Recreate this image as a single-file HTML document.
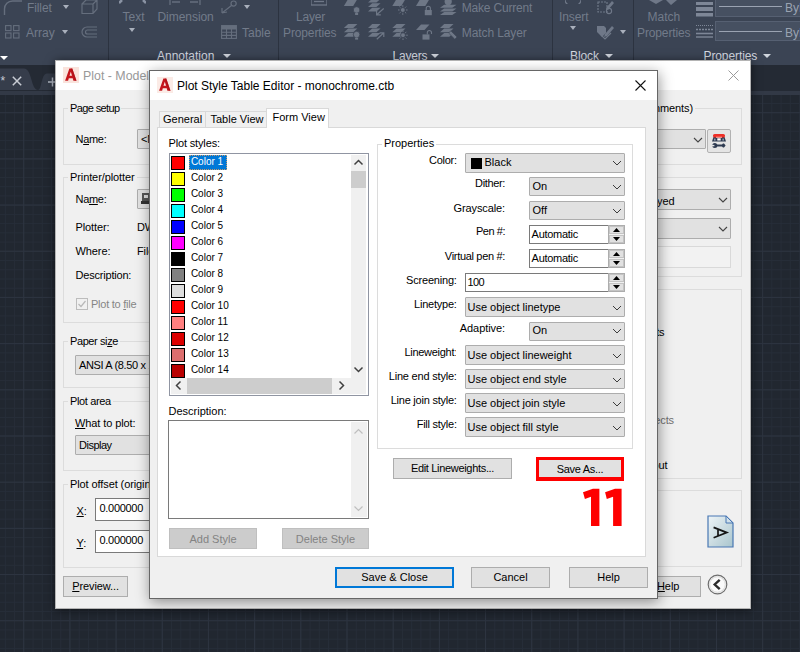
<!DOCTYPE html>
<html><head><meta charset="utf-8"><title>Plot Style Table Editor</title>
<style>
*{box-sizing:border-box;margin:0;padding:0}
html,body{width:800px;height:652px;overflow:hidden}
body{position:relative;background:#212832;font-family:"Liberation Sans",sans-serif;font-size:11px;color:#000}
div,span,svg{position:absolute}
span{white-space:pre;line-height:14px;height:14px}
#canvas{left:0;top:95px;width:800px;height:557px;background-color:#212730;
 background-image:linear-gradient(#2d3440 1px,transparent 1px),linear-gradient(90deg,#2d3440 1px,transparent 1px),linear-gradient(#262d38 1px,transparent 1px),linear-gradient(90deg,#262d38 1px,transparent 1px);
 background-size:46.2px 46.2px,46.2px 46.2px,9.24px 9.24px,9.24px 9.24px;background-position:0 17.2px,23.2px 0,0 8.1px,4.9px 0}
#ribbon{left:0;top:0;width:800px;height:65px;background:#3b4454}
#ribtitle{left:0;top:91px;width:800px;height:4px;background:#323946}
#tabbar{left:0;top:65px;width:800px;height:26px;background:#242a34}
.rt{color:#727b8a;font-size:12px}
.rl{color:#d6dae2;font-size:12px}
.sep{top:0;width:1px;height:65px;background:#2c3340}
.tri{width:0;height:0;border-left:3.5px solid transparent;border-right:3.5px solid transparent;border-top:4px solid #a9b0bc}
.tril{width:0;height:0;border-left:4px solid transparent;border-right:4px solid transparent;border-top:4.5px solid #d0d5dd}
#plot{left:55px;top:60px;width:696px;height:549px;background:#f0f0f0;border:1px solid #b4b4b4;box-shadow:0 1px 9px rgba(0,0,0,.55)}
#plot span{letter-spacing:-.1px}
#plot .title{left:0;top:0;width:694px;height:29px;background:#fff}
.grp{border:1px solid #dcdcdc}
.gl{background:#f0f0f0;padding:0 2px}
.glw{background:#fff;padding:0 2px}
.dis{color:#a0a0a0}
.btn{border:1px solid #adadad;background:#e1e1e1;text-align:center;height:21px}
.btn span{position:static;display:block;line-height:19px;height:19px}
.combo{border:1px solid #adadad;background:#e1e1e1;overflow:hidden;border-radius:1px}
.combo span{left:3px}
.input{border:1px solid #7a7a7a;background:#fff;overflow:hidden}
#ed{left:149px;top:70px;width:509px;height:529px;background:#f0f0f0;border:1px solid #666;box-shadow:1px 3px 13px rgba(0,0,0,.42)}
#ed .title{left:0;top:0;width:507px;height:29px;background:#fff}
u{text-decoration:underline}
</style></head><body>
<div id="canvas"></div><div id="ribbon"></div><div id="ribtitle"></div><div id="tabbar"></div>
<div class="sep" style="left:108px"></div><div class="sep" style="left:277.5px"></div><div class="sep" style="left:552px"></div><div class="sep" style="left:632.5px"></div>
<svg style="left:3px;top:0" width="20" height="15" viewBox="0 0 20 15"><path d="M1.5 15 V9 A8 8 0 0 1 9.5 1 H19" fill="none" stroke="#656e7d" stroke-width="1.4"/></svg><span class="rt" style="left:27px;top:1px;letter-spacing:-.1px">Fillet</span>
<div class="tri" style="left:63px;top:5px"></div><svg style="left:81px;top:0" width="17" height="15" viewBox="0 0 17 15"><path d="M1 4 L5 0 H16 V9 L12 13.5 H1 Z M1 4 H12 V13.5 M12 4 L16 0" fill="none" stroke="#656e7d" stroke-width="1.2"/></svg><svg style="left:5px;top:25px" width="15" height="14" viewBox="0 0 15 14"><g fill="none" stroke="#656e7d" stroke-width="1.1"><rect x=".6" y=".6" width="5.4" height="5"/><rect x="8.6" y=".6" width="5.4" height="5"/><rect x=".6" y="8" width="5.4" height="5"/><rect x="8.6" y="8" width="5.4" height="5"/></g></svg><span class="rt" style="left:26px;top:26px;">Array</span>
<div class="tri" style="left:62px;top:30px"></div><svg style="left:81px;top:26px" width="17" height="12" viewBox="0 0 17 12"><path d="M16 1 H6 A5 5 0 0 0 6 11 H16 M16 4 H6.5 A2 2 0 0 0 6.5 8 H16" fill="none" stroke="#656e7d" stroke-width="1.2"/></svg><div class="tril" style="left:0px;top:55.5px;border-top-color:#fff"></div><svg style="left:119px;top:0" width="27" height="4" viewBox="0 0 27 4"><path d="M0 3 L3 0 M27 3 L24 0" stroke="#8a93a3" stroke-width="2.5"/></svg><span class="rt" style="left:122.5px;top:9.5px;">Text</span>
<div class="tri" style="left:128.5px;top:28px"></div><svg style="left:168px;top:0" width="34" height="5" viewBox="0 0 34 5"><path d="M2 0 V5 M32 0 V5 M4 2 H12 M22 2 H30" stroke="#656e7d" stroke-width="1.3" fill="none"/></svg><span class="rt" style="left:157.5px;top:9.5px;letter-spacing:-.05px">Dimension</span>
<svg style="left:221px;top:0" width="17" height="14" viewBox="0 0 17 14"><path d="M1 13 L1 8 M1 13 L6 12 M1 13 L10.5 5.5" stroke="#656e7d" stroke-width="1.2" fill="none"/><circle cx="12.6" cy="3.6" r="2.6" fill="none" stroke="#656e7d" stroke-width="1.2"/></svg><div class="tri" style="left:244px;top:5px"></div><svg style="left:221px;top:25px" width="16" height="14" viewBox="0 0 16 14"><g fill="none" stroke="#656e7d" stroke-width="1.1"><rect x=".6" y=".6" width="14.8" height="12.8"/><path d="M.6 4 H15.4 M.6 7.2 H15.4 M.6 10.4 H15.4 M5.5 4 V13.4 M10.5 4 V13.4"/></g><rect x=".6" y=".6" width="14.8" height="3.4" fill="#656e7d"/></svg><span class="rt" style="left:242px;top:26px;">Table</span>
<span class="rl" style="left:157px;top:49px;">Annotation</span>
<div class="tril" style="left:222.5px;top:54px"></div><svg style="left:311px;top:0" width="16" height="6" viewBox="0 0 16 6"><rect x="0" y="-4" width="16" height="9" fill="none" stroke="#6f7888" stroke-width="1.3"/><path d="M3 1.5 H13" stroke="#6f7888" stroke-width="1.3"/></svg><span class="rt" style="left:296px;top:9.5px;letter-spacing:-.2px">Layer</span>
<span class="rt" style="left:283px;top:26px;letter-spacing:-.12px">Properties</span>
<svg style="left:338px;top:0" width="124" height="45" viewBox="338 0 124 45"><g fill="#6e7786"><path d="M348.09999999999997 -1 H357.4 L353.2 6 H343.9 Z "/><circle cx="356.6" cy="10" r="3.3" fill="#6e7786" stroke="#3b4454" stroke-width=".8"/><rect x="355.1" y="13" width="3" height="2" fill="#6e7786"/><path d="M372.2 -1.2 H380.6 L376.40000000000003 2.5999999999999996 H368 Z M372.2 3.3 H380.6 L376.40000000000003 7.1 H368 Z M372.2 7.8 H380.6 L376.40000000000003 11.6 H368 Z "/><path d="M383.7 8.5 L377.2 14.3 M376.6 10.8 V14.9 H380.8" stroke="#6e7786" stroke-width="1.2" fill="none"/><path d="M396.5 -1 H405.5 L401.3 6 H392.3 Z "/><circle cx="402.8" cy="10" r="2.4" fill="#6e7786" stroke="#3b4454" stroke-width=".8"/><path d="M402.8 5.2 V14.8 M398.0 10 H407.6 M399.40000000000003 6.6 L406.2 13.4 M406.2 6.6 L399.40000000000003 13.4" stroke="#6e7786" stroke-width="1" stroke-dasharray="1.6 6.4 1.6 0" fill="none"/><path d="M420.2 -1 H429.5 L425.3 6 H416 Z "/><rect x="424.8" y="10" width="7" height="5.2"/><path d="M426.2 10 V8.4 A2.1 2.1 0 0 1 430.4 8.4 V10" fill="none" stroke="#6e7786" stroke-width="1.1"/><circle cx="448.2" cy="1.6" r="3.6"/><path d="M444.2 4.8 H456.5 L452.3 7.8 H440 Z M444.2 8.4 H456.5 L452.3 11.4 H440 Z M444.2 12.0 H456.5 L452.3 15.0 H440 Z "/><path d="M348.09999999999997 24.0 H357.4 L353.2 27.9 H343.9 Z M348.09999999999997 28.45 H357.4 L353.2 32.35 H343.9 Z M348.09999999999997 32.9 H357.4 L353.2 36.8 H343.9 Z "/><circle cx="356.6" cy="34.6" r="3.3" fill="#6e7786" stroke="#3b4454" stroke-width=".8"/><rect x="355.1" y="37.6" width="3" height="2" fill="#6e7786"/><path d="M372.2 24.0 H380.6 L376.40000000000003 27.9 H368 Z M372.2 28.45 H380.6 L376.40000000000003 32.35 H368 Z M372.2 32.9 H380.6 L376.40000000000003 36.8 H368 Z "/><path d="M376.8 39.2 L383.3 33.2 M379.6 32.8 H383.8 V37" stroke="#6e7786" stroke-width="1.2" fill="none"/><path d="M396.5 24.0 H405.5 L401.3 27.9 H392.3 Z M396.5 28.45 H405.5 L401.3 32.35 H392.3 Z M396.5 32.9 H405.5 L401.3 36.8 H392.3 Z "/><circle cx="403" cy="35.2" r="2.4" fill="#6e7786" stroke="#3b4454" stroke-width=".8"/><path d="M403 30.400000000000002 V40.0 M398.2 35.2 H407.8 M399.6 31.800000000000004 L406.4 38.6 M406.4 31.800000000000004 L399.6 38.6" stroke="#6e7786" stroke-width="1" stroke-dasharray="1.6 6.4 1.6 0" fill="none"/><path d="M421 24.5 H429.5 L424.5 30.0 H416 Z "/><rect x="422.5" y="34.4" width="7" height="5.2"/><path d="M427.3 34.4 V32.6 A2.1 2.1 0 0 1 431.5 32.6 V34" fill="none" stroke="#6e7786" stroke-width="1.1"/><path d="M444.2 24.0 H453.5 L449.3 27.9 H440 Z M444.2 28.45 H453.5 L449.3 32.35 H440 Z M444.2 32.9 H453.5 L449.3 36.8 H440 Z "/><path d="M448.6 33 L450.8 30.8 L457 37 L454.8 39.2 Z" stroke="#3b4454" stroke-width=".6"/></g></svg><span class="rt" style="left:461.8px;top:0.7999999999999998px;letter-spacing:-.2px">Make Current</span>
<span class="rt" style="left:461.8px;top:26px;letter-spacing:-.1px">Match Layer</span>
<span class="rl" style="left:392.5px;top:49px;letter-spacing:-.2px">Layers</span>
<div class="tril" style="left:430.5px;top:54px"></div><svg style="left:565px;top:0" width="16" height="4" viewBox="0 0 16 4"><path d="M0 0 A8 6 0 0 0 16 0" fill="none" stroke="#6f7888" stroke-width="1.3"/></svg><span class="rt" style="left:559px;top:9.5px;letter-spacing:-.1px">Insert</span>
<div class="tri" style="left:569.5px;top:26px"></div><svg style="left:597px;top:0" width="18" height="15" viewBox="0 0 18 15"><path d="M1 2 H10 V12 H1 Z" fill="none" stroke="#6f7888" stroke-width="1.2" stroke-dasharray="2 1"/><path d="M9 8 L15 1 L17 3 L11 10 Z" fill="#6f7888"/><circle cx="12" cy="11" r="2.6" fill="none" stroke="#6f7888" stroke-width="1.1"/></svg><svg style="left:597px;top:24px" width="18" height="16" viewBox="0 0 18 16"><path d="M0 2 H7 L9 4 V9 L5 13 L0 8 Z" fill="#6f7888"/><path d="M8 10 L15 2 L17 4 L10 12 L7 13 Z" fill="#6f7888"/><path d="M4 11 L8 15 L14 9" fill="none" stroke="#6f7888" stroke-width="1.2"/></svg><div class="tri" style="left:619.5px;top:29.5px"></div><span class="rl" style="left:570px;top:49px;letter-spacing:-.1px">Block</span>
<div class="tril" style="left:605px;top:54px"></div><svg style="left:649px;top:0" width="30" height="6" viewBox="0 0 30 6"><path d="M0 0 L7 4 L14 0 M17 0 L22 5 L28 0" fill="#6f7888"/></svg><span class="rt" style="left:647.5px;top:9.5px;">Match</span>
<span class="rt" style="left:637px;top:26px;letter-spacing:-.12px">Properties</span>
<svg style="left:695.5px;top:2px" width="17" height="15" viewBox="0 0 17 15"><g fill="#7e8797"><rect x="0" y="0" width="17" height="3"/><rect x="0" y="5" width="17" height="4"/><rect x="0" y="11" width="17" height="3.5"/></g></svg><svg style="left:695.5px;top:24px" width="17" height="15" viewBox="0 0 17 15"><g stroke="#7e8797" fill="none"><path d="M0 1.5 H17" stroke-width="1.2" stroke-dasharray="1 1"/><path d="M0 5.5 H17" stroke-width="1.4" stroke-dasharray="2 1"/><path d="M0 9.5 H17" stroke-width="1.6"/><path d="M0 13 H17" stroke-width="1.4"/></g></svg><div style="left:715px;top:-3px;width:90px;height:20px;background:#465061;border:1px solid #566072"></div><div style="left:719px;top:6.0px;width:63px;height:1px;background:#9aa3b2"></div><span class="rt" style="left:785px;top:0.5px;color:#9aa3b2">ByL</span>
<div style="left:715px;top:21px;width:90px;height:20px;background:#465061;border:1px solid #566072"></div><div style="left:719px;top:31.0px;width:63px;height:1px;background:#9aa3b2"></div><span class="rt" style="left:785px;top:25.5px;color:#9aa3b2">ByL</span>
<span class="rl" style="left:703.5px;top:49px;letter-spacing:-.1px">Properties</span>
<div class="tril" style="left:763px;top:54px"></div><svg style="left:0;top:65px" width="60" height="25" viewBox="0 0 60 25"><path d="M0 3.5 H24 C32 3.5 31 25 38 25 H0 Z" fill="#363d4b"/><path d="M38 25 C42 25 41 8.5 47 8.5 H60 V25 Z" fill="#333a47"/></svg><span style="left:0.5px;top:74px;color:#c9ced8;font-size:12px">*</span>
<svg style="left:12px;top:75.5px" width="10" height="10" viewBox="0 0 10 10"><path d="M.8 .8 L9.2 9.2 M9.2 .8 L.8 9.2" stroke="#c8ccd4" stroke-width="1.5"/></svg><svg style="left:48px;top:77px" width="9" height="10" viewBox="0 0 9 10"><path d="M4.5 .5 V9.5 M0 5 H9" stroke="#b0b6c2" stroke-width="1.5"/></svg><div id="plot"><div class="title"></div>
<svg style="left:7px;top:6px" width="16" height="16" viewBox="0 0 16 16"><rect width="16" height="16" fill="#fae3dc"/><path d="M2.1 13.8 L6.4 1.6 H9.3 L13.5 13.8 H10.4 L9.7 11.2 H5.8 L5.1 13.8 Z M6.5 8.8 H9 L7.8 4.8 Z" fill="#c4161d"/><path d="M9.3 1.6 L13.5 13.8 H11.8 L7.9 1.6 Z" fill="#a30f15" opacity=".55"/></svg><span style="left:27px;top:7.5px;font-size:12.4px;color:#999;letter-spacing:0">Plot - Model</span>
<svg style="left:672px;top:8.5px" width="11" height="11" viewBox="0 0 11 11"><path d="M.5 .5 L10.5 10.5 M10.5 .5 L.5 10.5" stroke="#9a9a9a" stroke-width="1"/></svg><div class="grp" style="left:7px;top:47px;width:238px;height:57px"></div><span class="gl" style="left:12px;top:40px"><i style="font-style:normal;letter-spacing:-.62px">Page setup</i></span>
<span style="left:19.5px;top:70.69999999999999px;letter-spacing:-.3px">N<u>a</u>me:</span>
<div class="combo" style="left:81px;top:68px;width:163px;height:20px"><span style="top:2.0px">&lt;None&gt;</span></div><div class="grp" style="left:7px;top:116px;width:238px;height:146px"></div><span class="gl" style="left:12px;top:109px">Printer/plotter</span>
<span style="left:19.5px;top:131.3px;letter-spacing:-.3px">Na<u>m</u>e:</span>
<div class="combo" style="left:81px;top:128px;width:163px;height:20px"></div><svg style="left:85px;top:131px" width="12" height="14" viewBox="0 0 12 14"><rect x="1" y="1" width="10" height="11" fill="#555"/><rect x="3" y="3" width="4" height="3" fill="#ddd"/><rect x="0" y="9" width="12" height="3" fill="#333"/></svg><span style="left:19.5px;top:158.5px;">Plotter:</span>
<span style="left:81px;top:158.5px;">DWG To PDF</span>
<span style="left:19.5px;top:182.5px;">Where:</span>
<span style="left:81px;top:182.5px;">File</span>
<span style="left:19.5px;top:206.7px;letter-spacing:-.2px">Description:</span>
<div style="left:20px;top:237px;width:12px;height:12px;border:1px solid #bcbcbc;background:#f0f0f0"></div><svg style="left:21px;top:238px" width="10" height="10" viewBox="0 0 10 10"><path d="M1.5 5 L4 7.5 L8.5 2" fill="none" stroke="#b8b8b8" stroke-width="1.2"/></svg><span style="left:35px;top:236px;color:#858585;letter-spacing:-.25px">Plot to <u>f</u>ile</span>
<div class="grp" style="left:7px;top:280px;width:238px;height:47px"></div><span class="gl" style="left:12px;top:273px"><i style="font-style:normal;letter-spacing:-.4px">Paper si<u>z</u>e</i></span>
<div class="combo" style="left:19px;top:294px;width:225px;height:20.30000000000001px"><span style="top:2.1500000000000057px"><i style="font-style:normal;letter-spacing:-.35px">ANSI A (8.50 x 11.00 Inches)</i></span></div><div class="grp" style="left:7px;top:340px;width:238px;height:70px"></div><span class="gl" style="left:12px;top:333px"><i style="font-style:normal;letter-spacing:-.35px">Plot area</i></span>
<span style="left:19px;top:354.5px;"><u>W</u>hat to plot:</span>
<div class="combo" style="left:19px;top:374.3px;width:225px;height:20.19999999999999px"><span style="top:2.0999999999999943px"><i style="font-style:normal;letter-spacing:-.5px">Display</i></span></div><div class="grp" style="left:7px;top:423px;width:238px;height:84px"></div><span class="gl" style="left:12px;top:416px">Plot offset (origin set to printable area)</span>
<span style="left:20.5px;top:443px;"><u>X</u>:</span>
<div class="input" style="left:39px;top:437px;width:120px;height:22.5px"><span style="left:3.5px;top:1.5px;letter-spacing:-.3px">0.000000</span></div><span style="left:20.5px;top:474.5px;"><u>Y</u>:</span>
<div class="input" style="left:39px;top:468.79999999999995px;width:120px;height:22.8px"><span style="left:3.5px;top:1.8px;letter-spacing:-.3px">0.000000</span></div><div class="btn" style="left:7.299999999999997px;top:514.5px;width:64.5px;height:21px"><span><u>P</u>review...</span></div><div class="grp" style="left:424px;top:47px;width:262px;height:57px"></div><span style="right:55px;top:40px;background:#f0f0f0;padding:0 2px">Plot style table (pen assignments)</span>
<div class="combo" style="left:436px;top:68px;width:214px;height:20px"><span style="top:2.0px">monochrome.ctb</span></div><svg style="left:637.0px;top:75.5px" width="10" height="6" viewBox="-1 -1 10 6"><path d="M0 0 L4.0 4 L8 0" fill="none" stroke="#444" stroke-width="1.1"/></svg>
<div class="btn" style="left:651px;top:68px;width:24px;height:24px;border-radius:2px;background:#e4e4e4;border-color:#b2b2b2"></div><svg style="left:655px;top:72px" width="16" height="16" viewBox="0 0 16 16"><path d="M2.5 4 H13.5 L15 8.6 H1 Z" fill="#2d3a50"/><rect x="2" y="1" width="12" height="3.6" rx="1.6" fill="#ee2f27"/><rect x="5" y="3.6" width="6" height="1.4" fill="#f08a84"/><rect x="6.3" y="5.3" width="3.4" height="2.2" fill="#fff"/><rect x="3" y="5.6" width="1.6" height="2" fill="#8b97ab"/><rect x="11.4" y="5.6" width="1.6" height="2" fill="#8b97ab"/><path d="M4.5 11.6 H11 L12 10.6 H13 L14.6 12.6 L13 14.6 H12 L11 13.6 H4.5 Z" fill="#2d3a50"/><circle cx="3.8" cy="12.6" r="2.5" fill="#2d3a50"/><rect x="0" y="11.9" width="3.4" height="1.4" fill="#e4e4e4"/></svg><div class="grp" style="left:424px;top:116px;width:262px;height:100px"></div><span class="gl" style="left:429px;top:109px">Shaded viewport options</span>
<div class="combo" style="left:504px;top:128px;width:171px;height:21px"></div><svg style="left:662.0px;top:136.0px" width="10" height="6" viewBox="-1 -1 10 6"><path d="M0 0 L4.0 4 L8 0" fill="none" stroke="#444" stroke-width="1.1"/></svg>
<span style="right:75.5px;top:132.5px;">As displayed</span>
<div class="combo" style="left:504px;top:157px;width:171px;height:21px"></div><svg style="left:662.0px;top:165.0px" width="10" height="6" viewBox="-1 -1 10 6"><path d="M0 0 L4.0 4 L8 0" fill="none" stroke="#444" stroke-width="1.1"/></svg>
<div style="left:504px;top:185px;width:171px;height:22px;border:1px solid #d9d9d9;background:#f2f2f2"></div><div class="grp" style="left:424px;top:228px;width:262px;height:190px"></div><span class="gl" style="left:429px;top:221px">Plot options</span>
<span style="right:85.5px;top:263.5px;">Plot object lineweights</span>
<span style="right:76px;top:352px;color:#707070">Hide paperspace objects</span>
<span style="right:82.5px;top:396.5px;">Save changes to layout</span>
<div class="grp" style="left:424px;top:429px;width:262px;height:77px"></div><span class="gl" style="left:429px;top:422px">Drawing orientation</span>
<svg style="left:650.5px;top:453.5px" width="27" height="33" viewBox="0 0 27 33"><defs><linearGradient id="pg" x1="0" y1="0" x2="1" y2="1"><stop offset="0" stop-color="#eef4f7"/><stop offset="1" stop-color="#a9c5cd"/></linearGradient></defs><path d="M1 1 H19 L26 8 V32 H1 Z" fill="url(#pg)" stroke="#4877b3" stroke-width="1.2"/><path d="M19 1 V8 H26 Z" fill="#cfe0ea" stroke="#4877b3" stroke-width="1"/><g transform="translate(13.2,17.6) rotate(90)"><path d="M-5.2 6.6 L0 -6.6 L5.2 6.6 M-3.3 2.2 H3.3" fill="none" stroke="#151515" stroke-width="1.7"/></g></svg><div class="btn" style="left:561px;top:515px;width:84px;height:21px"><span style="text-align:left;padding-left:39px"><u>H</u>elp</span></div><svg style="left:650.5px;top:513px" width="21" height="21" viewBox="0 0 21 21"><circle cx="10.5" cy="10.5" r="9.3" fill="#fafafa" stroke="#6e6e6e" stroke-width="1.2"/><circle cx="10.5" cy="10.5" r="7.8" fill="none" stroke="#d8d8d8" stroke-width="1"/><path d="M12.7 5.8 L7.7 10.5 L12.7 15.2" fill="none" stroke="#2a2a2a" stroke-width="2.4"/></svg></div>
<div id="ed"><div class="title"></div>
<svg style="left:7px;top:6px" width="16" height="16" viewBox="0 0 16 16"><rect width="16" height="16" fill="#fbebe6"/><path d="M2.1 13.8 L6.4 1.6 H9.3 L13.5 13.8 H10.4 L9.7 11.2 H5.8 L5.1 13.8 Z M6.5 8.8 H9 L7.8 4.8 Z" fill="#c4161d"/><path d="M9.3 1.6 L13.5 13.8 H11.8 L7.9 1.6 Z" fill="#a30f15" opacity=".55"/></svg><span style="left:27px;top:7.5px;font-size:12px">Plot Style Table Editor - monochrome.ctb</span>
<svg style="left:485px;top:9px" width="11" height="11" viewBox="0 0 11 11"><path d="M.5 .5 L10.5 10.5 M10.5 .5 L.5 10.5" stroke="#111" stroke-width="1.1"/></svg><div style="left:7px;top:56px;width:489px;height:430px;background:#fff;border:1px solid #d9d9d9"></div><div style="left:9px;top:40px;width:47px;height:16px;background:#f0f0f0;border:1px solid #d9d9d9;border-bottom:none"></div><div style="left:55px;top:40px;width:62px;height:16px;background:#f0f0f0;border:1px solid #d9d9d9;border-bottom:none"></div><div style="left:116px;top:37px;width:63px;height:20px;background:#fff;border:1px solid #d9d9d9;border-bottom:none"></div><span style="left:13px;top:40.5px;">General</span>
<span style="left:60.5px;top:40.5px;">Table View</span>
<span style="left:122.5px;top:39px;">Form View</span>
<span style="left:18.5px;top:64.69999999999999px;letter-spacing:-.15px">Plot styles:</span>
<div style="left:18.5px;top:81.5px;width:200px;height:243px;background:#fff;border:1px solid #9095a2;overflow:hidden"><div style="left:1.7px;top:2px;width:14px;height:14px;background:#ff0000;border:1px solid #000"></div><div style="left:19.5px;top:1.2px;width:38px;height:15.3px;background:#0078d7;border:1px dotted #c89a6a"></div><span style="left:21.4px;top:1.2px;font-size:10px;color:#fff;">Color 1</span><div style="left:1.7px;top:18px;width:14px;height:14px;background:#ffff00;border:1px solid #000"></div><span style="left:21.4px;top:17.2px;font-size:10px;">Color 2</span><div style="left:1.7px;top:34px;width:14px;height:14px;background:#00ff00;border:1px solid #000"></div><span style="left:21.4px;top:33.2px;font-size:10px;">Color 3</span><div style="left:1.7px;top:50px;width:14px;height:14px;background:#00ffff;border:1px solid #000"></div><span style="left:21.4px;top:49.2px;font-size:10px;">Color 4</span><div style="left:1.7px;top:66px;width:14px;height:14px;background:#0000ff;border:1px solid #000"></div><span style="left:21.4px;top:65.2px;font-size:10px;">Color 5</span><div style="left:1.7px;top:82px;width:14px;height:14px;background:#ff00ff;border:1px solid #000"></div><span style="left:21.4px;top:81.2px;font-size:10px;">Color 6</span><div style="left:1.7px;top:98px;width:14px;height:14px;background:#000000;border:1px solid #000"></div><span style="left:21.4px;top:97.2px;font-size:10px;">Color 7</span><div style="left:1.7px;top:114px;width:14px;height:14px;background:#808080;border:1px solid #000"></div><span style="left:21.4px;top:113.2px;font-size:10px;">Color 8</span><div style="left:1.7px;top:130px;width:14px;height:14px;background:#dedede;border:1px solid #000"></div><span style="left:21.4px;top:129.2px;font-size:10px;">Color 9</span><div style="left:1.7px;top:146px;width:14px;height:14px;background:#ff0000;border:1px solid #000"></div><span style="left:21.4px;top:145.2px;font-size:10px;">Color 10</span><div style="left:1.7px;top:162px;width:14px;height:14px;background:#ff7f7f;border:1px solid #000"></div><span style="left:21.4px;top:161.2px;font-size:10px;">Color 11</span><div style="left:1.7px;top:178px;width:14px;height:14px;background:#dc0000;border:1px solid #000"></div><span style="left:21.4px;top:177.2px;font-size:10px;">Color 12</span><div style="left:1.7px;top:194px;width:14px;height:14px;background:#dc6e6e;border:1px solid #000"></div><span style="left:21.4px;top:193.2px;font-size:10px;">Color 13</span><div style="left:1.7px;top:210px;width:14px;height:14px;background:#b90000;border:1px solid #000"></div><span style="left:21.4px;top:209.2px;font-size:10px;">Color 14</span><div style="left:181.5px;top:1.5px;width:15px;height:223.5px;background:#f0f0f0"></div><div style="left:181.5px;top:17.5px;width:15px;height:17px;background:#cdcdcd"></div><svg style="left:183.5px;top:5.6px" width="11" height="7" viewBox="0 0 11 7"><path d="M1.5 5.5 L5.5 1.5 L9.5 5.5" fill="none" stroke="#404040" stroke-width="1.5"/></svg><svg style="left:183px;top:212px" width="11" height="7" viewBox="0 0 11 7"><path d="M1.5 1.5 L5.5 5.5 L9.5 1.5" fill="none" stroke="#404040" stroke-width="1.5"/></svg><div style="left:1.7px;top:224.9px;width:194.8px;height:15.3px;background:#f0f0f0"></div><div style="left:17.7px;top:224.9px;width:144.8px;height:15.3px;background:#cdcdcd"></div><svg style="left:5.1px;top:226.6px" width="7" height="11" viewBox="0 0 7 11"><path d="M5.5 1.5 L1.5 5.5 L5.5 9.5" fill="none" stroke="#404040" stroke-width="1.5"/></svg><svg style="left:168px;top:226.6px" width="7" height="11" viewBox="0 0 7 11"><path d="M1.5 1.5 L5.5 5.5 L1.5 9.5" fill="none" stroke="#404040" stroke-width="1.5"/></svg></div>
<span style="left:18.5px;top:333px;">Description:</span>
<div style="left:18px;top:349px;width:201px;height:99px;background:#fff;border:1px solid #7a7a7a"><div style="left:182px;top:1px;width:16px;height:95px;background:#f0f0f0"></div><svg style="left:184px;top:7px" width="11" height="7" viewBox="0 0 11 7"><path d="M1.5 5.5 L5.5 1.5 L9.5 5.5" fill="none" stroke="#bfbfbf" stroke-width="1.2"/></svg><svg style="left:184px;top:84px" width="11" height="7" viewBox="0 0 11 7"><path d="M1.5 1.5 L5.5 5.5 L9.5 1.5" fill="none" stroke="#bfbfbf" stroke-width="1.2"/></svg></div>
<div class="btn" style="left:19px;top:457px;width:88px;height:21px;background:#cccccc;border-color:#bfbfbf;color:#838383"><span style="padding-top:1px">Add Style</span></div><div class="btn" style="left:132px;top:457px;width:87px;height:21px;background:#cccccc;border-color:#bfbfbf;color:#838383"><span style="padding-top:1px">Delete Style</span></div><div class="grp" style="left:227px;top:72.5px;width:256px;height:305px"></div><span class="glw" style="left:232px;top:64.5px">Properties</span>
<span style="right:200.3px;top:81.80000000000001px;letter-spacing:-0.27px">Color:</span>
<span style="right:152px;top:105.4px;letter-spacing:-0.36px">Dither:</span>
<span style="right:152px;top:129.7px;letter-spacing:-0.11px">Grayscale:</span>
<span style="right:152px;top:153.4px;letter-spacing:-0.45px">Pen #:</span>
<span style="right:152px;top:177.7px;letter-spacing:-0.32px">Virtual pen #:</span>
<span style="right:200.3px;top:201.60000000000002px;letter-spacing:-0.2px">Screening:</span>
<span style="right:200.3px;top:226px;letter-spacing:-0.22px">Linetype:</span>
<span style="right:152px;top:250px;letter-spacing:-0.07px">Adaptive:</span>
<span style="right:202.8px;top:274.4px;letter-spacing:-0.28px">Lineweight</span>
<span style="right:200.3px;top:298.3px;letter-spacing:-0.2px">Line end style:</span>
<span style="right:200.3px;top:322.3px;letter-spacing:-0.23px">Line join style:</span>
<span style="right:200.3px;top:346.2px;letter-spacing:-0.25px">Fill style:</span>
<span style="left:304.6px;top:274.4px;width:1.6px;overflow:hidden">:</span><div class="combo" style="left:315px;top:82px;width:160px;height:20px"><div style="left:5px;top:4px;width:11px;height:11px;background:#000"></div><span style="left:18.5px;top:1.4000000000000004px">Black</span></div><svg style="left:461.5px;top:89.30000000000001px" width="10" height="6" viewBox="-1 -1 10 6"><path d="M0 0 L4.0 4 L8 0" fill="none" stroke="#3c3c3c" stroke-width="1.0"/></svg>

<div class="combo" style="left:379px;top:106px;width:96px;height:19px"><span style="left:2.5px;top:0.9000000000000004px">On</span></div><svg style="left:461.5px;top:112.80000000000001px" width="10" height="6" viewBox="-1 -1 10 6"><path d="M0 0 L4.0 4 L8 0" fill="none" stroke="#3c3c3c" stroke-width="1.0"/></svg>

<div class="combo" style="left:379px;top:130px;width:96px;height:19px"><span style="left:2.5px;top:0.9000000000000004px">Off</span></div><svg style="left:461.5px;top:136.8px" width="10" height="6" viewBox="-1 -1 10 6"><path d="M0 0 L4.0 4 L8 0" fill="none" stroke="#3c3c3c" stroke-width="1.0"/></svg>

<div class="input" style="left:379px;top:154px;width:80px;height:19px"><span style="left:1.6px;top:.7px;letter-spacing:-.28px">Automatic</span></div><div style="left:458px;top:154px;width:17px;height:19px;background:#f0f0f0;border:1px solid #adadad"></div><div style="left:459px;top:155px;width:15px;height:8px;background:#e1e1e1;border:1px solid #c4c4c4"></div><div style="left:459px;top:164px;width:15px;height:8px;background:#e1e1e1;border:1px solid #c4c4c4"></div><svg style="left:463px;top:157px" width="7" height="4" viewBox="0 0 7 4"><path d="M0 4 L3.5 0 L7 4 Z" fill="#000"/></svg><svg style="left:463px;top:166px" width="7" height="4" viewBox="0 0 7 4"><path d="M0 0 L3.5 4 L7 0 Z" fill="#000"/></svg>
<div class="input" style="left:379px;top:178px;width:80px;height:19px"><span style="left:1.6px;top:.7px;letter-spacing:-.28px">Automatic</span></div><div style="left:458px;top:178px;width:17px;height:19px;background:#f0f0f0;border:1px solid #adadad"></div><div style="left:459px;top:179px;width:15px;height:8px;background:#e1e1e1;border:1px solid #c4c4c4"></div><div style="left:459px;top:188px;width:15px;height:8px;background:#e1e1e1;border:1px solid #c4c4c4"></div><svg style="left:463px;top:181px" width="7" height="4" viewBox="0 0 7 4"><path d="M0 4 L3.5 0 L7 4 Z" fill="#000"/></svg><svg style="left:463px;top:190px" width="7" height="4" viewBox="0 0 7 4"><path d="M0 0 L3.5 4 L7 0 Z" fill="#000"/></svg>
<div class="input" style="left:315px;top:202px;width:144px;height:19px"><span style="left:1.6px;top:.7px;letter-spacing:-.7px">100</span></div><div style="left:458px;top:202px;width:17px;height:19px;background:#f0f0f0;border:1px solid #adadad"></div><div style="left:459px;top:203px;width:15px;height:8px;background:#e1e1e1;border:1px solid #c4c4c4"></div><div style="left:459px;top:212px;width:15px;height:8px;background:#e1e1e1;border:1px solid #c4c4c4"></div><svg style="left:463px;top:205px" width="7" height="4" viewBox="0 0 7 4"><path d="M0 4 L3.5 0 L7 4 Z" fill="#000"/></svg><svg style="left:463px;top:214px" width="7" height="4" viewBox="0 0 7 4"><path d="M0 0 L3.5 4 L7 0 Z" fill="#000"/></svg>
<div class="combo" style="left:315px;top:226.2px;width:160px;height:20px"><span style="left:1.5px;top:1.4000000000000004px">Use object linetype</span></div><svg style="left:461.5px;top:233.5px" width="10" height="6" viewBox="-1 -1 10 6"><path d="M0 0 L4.0 4 L8 0" fill="none" stroke="#3c3c3c" stroke-width="1.0"/></svg>

<div class="combo" style="left:379px;top:250.5px;width:96px;height:19px"><span style="left:2.5px;top:0.9000000000000004px">On</span></div><svg style="left:461.5px;top:257.3px" width="10" height="6" viewBox="-1 -1 10 6"><path d="M0 0 L4.0 4 L8 0" fill="none" stroke="#3c3c3c" stroke-width="1.0"/></svg>

<div class="combo" style="left:315px;top:274.2px;width:160px;height:20px"><span style="left:1.5px;top:1.4000000000000004px">Use object lineweight</span></div><svg style="left:461.5px;top:281.5px" width="10" height="6" viewBox="-1 -1 10 6"><path d="M0 0 L4.0 4 L8 0" fill="none" stroke="#3c3c3c" stroke-width="1.0"/></svg>

<div class="combo" style="left:315px;top:298.2px;width:160px;height:20px"><span style="left:1.5px;top:1.4000000000000004px">Use object end style</span></div><svg style="left:461.5px;top:305.5px" width="10" height="6" viewBox="-1 -1 10 6"><path d="M0 0 L4.0 4 L8 0" fill="none" stroke="#3c3c3c" stroke-width="1.0"/></svg>

<div class="combo" style="left:315px;top:322.2px;width:160px;height:20px"><span style="left:1.5px;top:1.4000000000000004px">Use object join style</span></div><svg style="left:461.5px;top:329.5px" width="10" height="6" viewBox="-1 -1 10 6"><path d="M0 0 L4.0 4 L8 0" fill="none" stroke="#3c3c3c" stroke-width="1.0"/></svg>

<div class="combo" style="left:315px;top:346.2px;width:160px;height:20px"><span style="left:1.5px;top:1.4000000000000004px">Use object fill style</span></div><svg style="left:461.5px;top:353.5px" width="10" height="6" viewBox="-1 -1 10 6"><path d="M0 0 L4.0 4 L8 0" fill="none" stroke="#3c3c3c" stroke-width="1.0"/></svg>

<div class="btn" style="left:243px;top:387px;width:119px;height:21px"><span style="letter-spacing:-.32px">Edit Lineweights...</span></div><div style="left:386px;top:385.8px;width:88px;height:23.8px;background:#fe0000"></div><div class="btn" style="left:389.4px;top:389.4px;width:81.2px;height:16.6px;border:none;background:#e1e1e1"><span style="line-height:16.6px;height:16.6px;letter-spacing:-.3px;padding-top:1px">Save As...</span></div><svg style="left:431px;top:416px" width="45" height="41" viewBox="581 487 45 41"><path d="M592.9 488.7 H599.4 V525.9 H591 V496.7 L584.9 498.9 L583 492.2 Z M615 488.7 H621.6 V525.9 H613.1 V496.7 L606.8 498.9 L605.1 492.2 Z" fill="#fe0000"/></svg><div class="btn" style="left:185px;top:496px;width:119px;height:21px;border:2px solid #0078d7"><span style="line-height:17px;height:17px">Save &amp; Close</span></div><div class="btn" style="left:321px;top:496px;width:79px;height:21px"><span>Cancel</span></div><div class="btn" style="left:419px;top:496px;width:79px;height:21px"><span>Help</span></div></div>
</body></html>
